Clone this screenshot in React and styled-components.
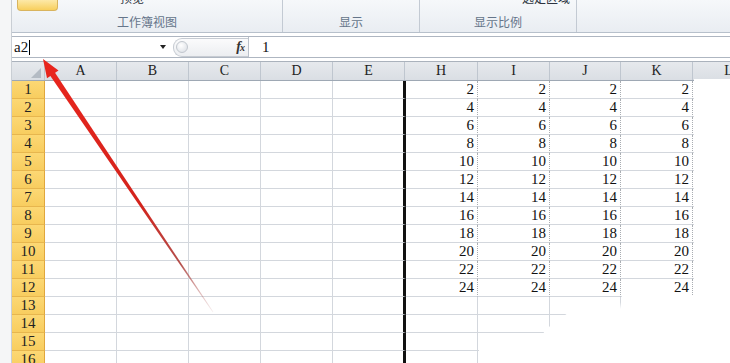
import React from 'react'
import styled, { createGlobalStyle } from 'styled-components'

const GlobalStyle = createGlobalStyle`
  html, body {
    margin: 0;
    padding: 0;
    background: #ffffff;
    overflow: hidden;
  }
`

const SERIF = `"Liberation Serif", "DejaVu Serif", serif`
const CJK = `"Noto Sans CJK SC", "Noto Sans", sans-serif`

const Page = styled.div`
  position: relative;
  display: flex;
  width: 730px;
  height: 363px;
  overflow: hidden;
  background: #ffffff;
`

const Edge = styled.div`
  width: 11px;
  flex-shrink: 0;
  background: #f5f6f7;
  border-right: 1px solid #c9ced4;
`

const Main = styled.div`
  flex: 1;
  display: flex;
  flex-direction: column;
  min-width: 0;
`

const Ribbon = styled.div`
  display: flex;
  height: 32px;
  flex-shrink: 0;
  background: linear-gradient(#f6f8fa, #e9edf2);
  border-bottom: 1px solid #b7c0cb;
`

const Group = styled.div`
  width: ${props => props.width}px;
  flex-shrink: 0;
  display: flex;
  flex-direction: column;
  border-right: ${props => (props.last ? 'none' : '1px solid #c3cad3')};
  box-sizing: border-box;
`

const GroupContent = styled.div`
  height: 13px;
  overflow: hidden;
  display: flex;
  align-items: flex-end;
`

const GroupLabel = styled.div`
  flex: 1;
  text-align: center;
  font-family: ${CJK};
  font-size: 12px;
  line-height: 17px;
  color: #65758a;
`

const YellowButton = styled.div`
  width: 41px;
  height: 11px;
  margin-bottom: 2px;
  margin-left: 5px;
  border: 1px solid #d9b45e;
  border-top: none;
  border-radius: 0 0 4px 4px;
  background: linear-gradient(#fde9a8, #f8cf5d);
  box-sizing: border-box;
`

const CutText = styled.span`
  font-family: ${CJK};
  font-size: 12px;
  line-height: 12px;
  color: #2c3440;
  margin-bottom: 9px;
  margin-left: ${props => props.offset}px;
  white-space: nowrap;
`

const FormulaBar = styled.div`
  display: flex;
  flex-shrink: 0;
  height: 22px;
  margin-top: 3px;
  background: #ffffff;
  border-top: 1px solid #aeb6c1;
  border-bottom: 1px solid #aeb6c1;
  box-sizing: border-box;
`

const NameBox = styled.div`
  width: 159px;
  flex-shrink: 0;
  display: flex;
  align-items: center;
  padding-left: 2px;
  box-sizing: border-box;
  font-family: ${SERIF};
  font-size: 15px;
  color: #111;
`

const Caret = styled.span`
  width: 1px;
  height: 15px;
  background: #000;
  margin-left: 1px;
`

const DropArrow = styled.span`
  margin-left: auto;
  margin-right: 5px;
  width: 0;
  height: 0;
  border-left: 3px solid transparent;
  border-right: 3px solid transparent;
  border-top: 4px solid #222;
`

const Tools = styled.div`
  width: 77px;
  flex-shrink: 0;
  display: flex;
  align-items: center;
  border-right: 1px solid #b9c0ca;
`

const Pill = styled.div`
  flex: 1;
  height: 17px;
  margin-left: 2px;
  display: flex;
  align-items: center;
  justify-content: space-between;
  padding: 0 4px 0 2px;
  border: 1px solid #c6cbd2;
  border-right: none;
  border-radius: 9px 0 0 9px;
  background: linear-gradient(#fbfbfc, #eceef1);
`

const Knob = styled.span`
  width: 12px;
  height: 12px;
  border-radius: 50%;
  border: 1px solid #c2c7ce;
  background: radial-gradient(circle at 40% 35%, #ffffff, #d8dce2);
  box-sizing: border-box;
`

const Fx = styled.span`
  font-family: ${SERIF};
  font-style: italic;
  font-weight: bold;
  font-size: 14px;
  color: #333;
  letter-spacing: -1px;

  small {
    font-size: 10px;
  }
`

const FormulaInput = styled.div`
  flex: 1;
  padding-left: 13px;
  display: flex;
  align-items: center;
  font-family: ${SERIF};
  font-size: 15px;
  color: #111;
`

const Sheet = styled.div`
  margin-top: 3px;
  display: flex;
  flex-direction: column;
`

const HeaderRow = styled.div`
  display: flex;
  height: 20px;
  border-top: 1px solid #aab2bc;
  border-bottom: 1px solid #9ea8b4;
  box-sizing: border-box;
  background: linear-gradient(#e6e9ed, #dadee4);
`

const Corner = styled.div`
  width: 33px;
  flex-shrink: 0;
  display: flex;
  align-items: flex-end;
  justify-content: flex-end;
  padding: 0 3px 2px 0;
  box-sizing: border-box;
  border-right: 1px solid #bfc6cf;
`

const ColHead = styled.div`
  width: ${props => props.width}px;
  flex-shrink: 0;
  box-sizing: border-box;
  border-right: 1px solid #bfc6cf;
  text-align: center;
  font-family: ${SERIF};
  font-size: 14px;
  line-height: 18px;
  color: #222;
`

const Row = styled.div`
  display: flex;
  height: 18px;
  flex-shrink: 0;
`

const RowHead = styled.div`
  width: 33px;
  flex-shrink: 0;
  box-sizing: border-box;
  background: linear-gradient(#fcd874, #f8cd5f);
  border-right: 1px solid #e0a73d;
  border-bottom: 1px solid #e7b64e;
  text-align: center;
  font-family: ${SERIF};
  font-size: 15px;
  line-height: 17px;
  color: #222;
`

const Cell = styled.div`
  width: ${props => props.width}px;
  flex-shrink: 0;
  box-sizing: border-box;
  border-bottom: 1px solid #d3d7dd;
  border-right: ${props => props.thick
    ? '3px solid #111'
    : props.dotted ? '1px dotted #a9adb2' : '1px solid #d3d7dd'};
  text-align: right;
  padding-right: 3px;
  font-family: ${SERIF};
  font-size: 15px;
  line-height: 17px;
  color: #111;
`

const Overlay = styled.svg`
  position: absolute;
  left: 0;
  top: 0;
  pointer-events: none;
`

const headCols = [
  ['A', 72], ['B', 72], ['C', 72], ['D', 72], ['E', 72],
  ['H', 73], ['I', 72], ['J', 71], ['K', 72], ['L', 72]
]
const bodyWidths = [72, 72, 72, 72, 73, 72, 72, 71, 72, 72]

export default function App () {
  const rows = Array.from({ length: 16 }, (_, i) => i + 1)

  return (
    <Page>
      <GlobalStyle />
      <Edge />
      <Main>
        <Ribbon>
          <Group width={271}>
            <GroupContent>
              <YellowButton />
              <CutText offset={62}>预览</CutText>
            </GroupContent>
            <GroupLabel>工作簿视图</GroupLabel>
          </Group>
          <Group width={137}>
            <GroupContent />
            <GroupLabel>显示</GroupLabel>
          </Group>
          <Group width={157}>
            <GroupContent>
              <CutText offset={102}>选定区域</CutText>
            </GroupContent>
            <GroupLabel>显示比例</GroupLabel>
          </Group>
          <Group width={153} last>
            <GroupContent />
          </Group>
        </Ribbon>

        <FormulaBar>
          <NameBox>
            a2<Caret />
            <DropArrow />
          </NameBox>
          <Tools>
            <Pill>
              <Knob />
              <Fx>f<small>x</small></Fx>
            </Pill>
          </Tools>
          <FormulaInput>1</FormulaInput>
        </FormulaBar>

        <Sheet>
          <HeaderRow>
            <Corner>
              <svg width="10" height="10" viewBox="0 0 10 10">
                <polygon points="10,0 10,10 0,10" fill="#b4bbc4" />
              </svg>
            </Corner>
            {headCols.map(([name, w]) => (
              <ColHead key={name} width={w}>{name}</ColHead>
            ))}
          </HeaderRow>
          {rows.map(r => (
            <Row key={r}>
              <RowHead>{r}</RowHead>
              {bodyWidths.map((w, c) => {
                const isNum = c >= 5 && c <= 8 && r <= 12
                return (
                  <Cell key={c} width={w} thick={c === 4} dotted={isNum}>
                    {isNum ? r * 2 : ''}
                  </Cell>
                )
              })}
            </Row>
          ))}
        </Sheet>
      </Main>

      <Overlay width="730" height="363" viewBox="0 0 730 363">
        <defs>
          <linearGradient id="arrowFade" gradientUnits="userSpaceOnUse" x1="50" y1="72" x2="213" y2="312">
            <stop offset="0" stopColor="#e8251d" />
            <stop offset="0.55" stopColor="#d3231c" />
            <stop offset="0.8" stopColor="#a8302c" stopOpacity="0.85" />
            <stop offset="1" stopColor="#b06060" stopOpacity="0.1" />
          </linearGradient>
        </defs>
        <polygon
          fill="#ffffff"
          points="694,79 730,79 730,363 479,363 479,350 538,349 544,332 551,325 568,313 620,309 622,295 694,295"
        />
        <polygon
          fill="url(#arrowFade)"
          points="53.2,70.0 48.5,73.3 212.7,312.2 213.3,311.8"
        />
        <polygon fill="#e8251d" points="43,59 58.5,70.4 47,78.3" />
      </Overlay>
    </Page>
  )
}
